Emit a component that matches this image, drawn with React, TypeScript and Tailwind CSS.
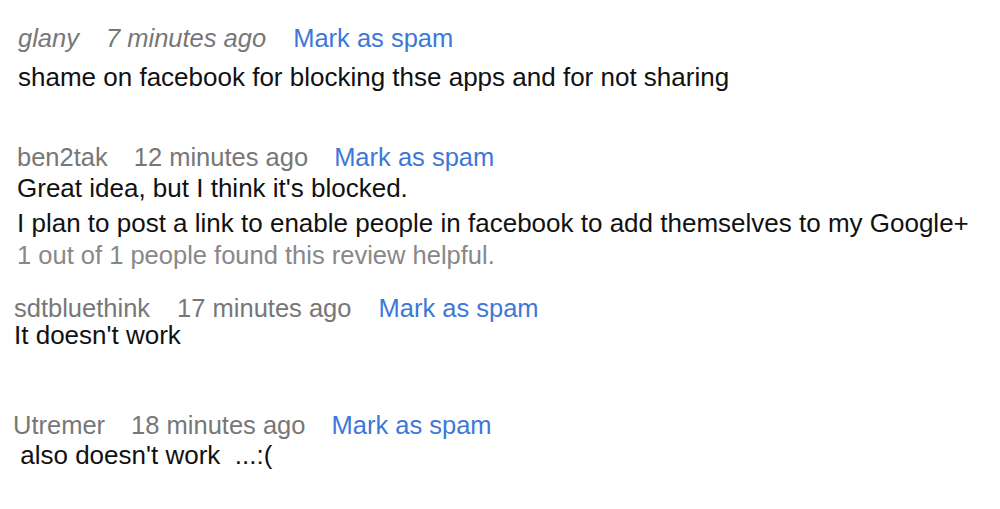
const COMMENTS = [
  {
    name: "glany",
    time: "7 minutes ago",
    italic: true,
    pl: "pl-[18px]",
    mt: "mt-[25px]",
    gapName: "gap-[27px]",
    lines: [{ text: "shame on facebook for blocking thse apps and for not sharing", mt: "mt-[13px]" }],
  },
  {
    name: "ben2tak",
    time: "12 minutes ago",
    italic: false,
    pl: "pl-[17px]",
    mt: "mt-[54px]",
    gapName: "gap-[26px]",
    lines: [
      { text: "Great idea, but I think it's blocked.", mt: "mt-[5px]" },
      {
        text: "I plan to post a link to enable people in facebook to add themselves to my Google+",
        mt: "mt-[9px]",
      },
    ],
    helpful: "1 out of 1 people found this review helpful.",
  },
  {
    name: "sdtbluethink",
    time: "17 minutes ago",
    italic: false,
    pl: "pl-[14px]",
    mt: "mt-[25px]",
    gapName: "gap-[27px]",
    lines: [{ text: "It doesn't work", mt: "mt-[1px]" }],
  },
  {
    name: "Utremer",
    time: "18 minutes ago",
    italic: false,
    pl: "pl-[13px]",
    mt: "mt-[64px]",
    gapName: "gap-[26px]",
    lines: [{ text: "\u00a0also doesn't work \u00a0...:(", mt: "mt-[4px]" }],
  },
];

export default function App() {
  return (
    <div
      className="h-[509px] w-[1000px] overflow-hidden bg-white text-[25.5px] leading-[26px] text-[#111]"
      style={{ fontFamily: '"Liberation Sans", Arial, sans-serif' }}
    >
      {COMMENTS.map((c) => (
        <div key={c.name} className={`${c.pl} ${c.mt}`}>
          {/* header: author, time, spam link */}
          <div className={`flex items-center whitespace-nowrap ${c.gapName}`}>
            <span className={`text-[#777] ${c.italic ? "italic" : ""}`}>{c.name}</span>
            <span className={`text-[#777] ${c.italic ? "italic" : ""}`}>{c.time}</span>
            <span className="text-[#3d78d8]">Mark as spam</span>
          </div>
          {c.lines.map((l) => (
            <div key={l.text} className={`whitespace-nowrap text-[26px] ${l.mt}`}>
              {l.text}
            </div>
          ))}
          {c.helpful && (
            <div className="mt-[4px] whitespace-nowrap leading-[30px] text-[#888]">{c.helpful}</div>
          )}
        </div>
      ))}
    </div>
  );
}
